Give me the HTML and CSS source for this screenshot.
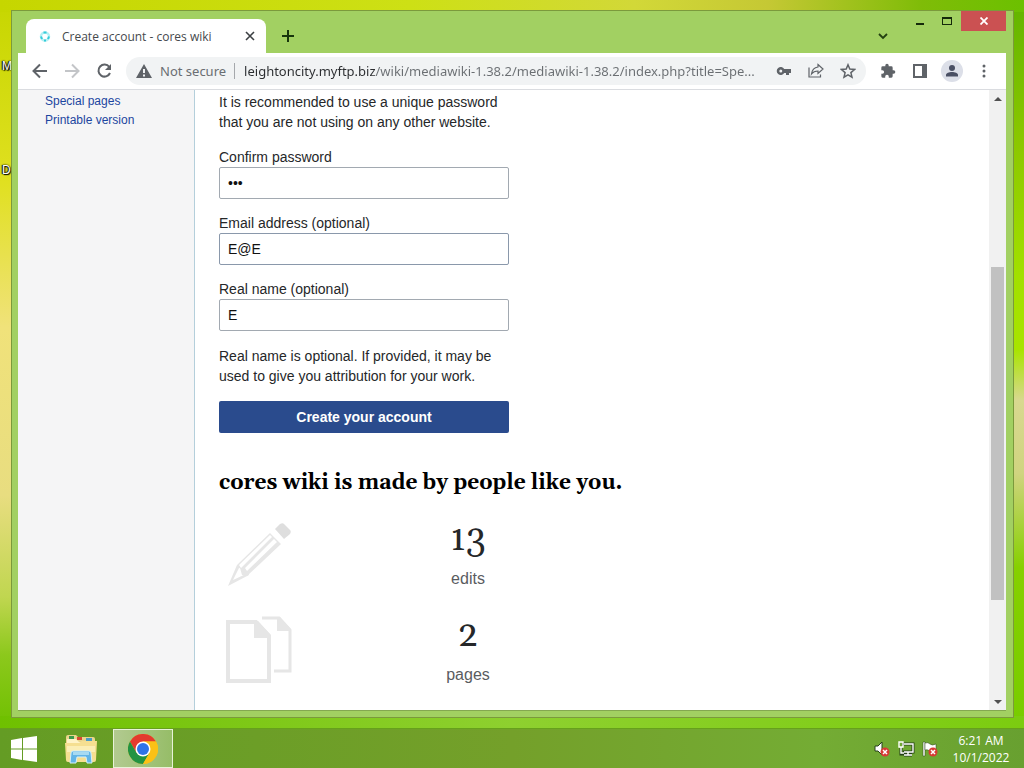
FILE: index.html
```html
<!DOCTYPE html>
<html lang="en">
<head>
    <meta charset="UTF-8">
    <meta name="viewport" content="width=device-width, initial-scale=1.0">
    <title>Create account - cores wiki</title>
    <link rel="stylesheet" href="styles.css">
</head>
<body>
    <div class="desktop">
        <span class="desktop-label label-m">M</span>
        <span class="desktop-label label-d">D</span>

        <div class="window">
            <!-- Title bar -->
            <div class="titlebar">
                <div class="tab">
                    <svg class="favicon" width="14" height="14" viewBox="0 0 14 14" fill="none">
                        <circle cx="7" cy="7.500" r="4" stroke="#b4f0f4" stroke-width="2.500"/>
                        <path d="M5.500 3.500h3M3 7.500l1 2.500M11 7.500l-1 2.500M6 11.500h2" stroke="#35cbd8" stroke-width="2"/>
                    </svg>
                    <span class="tab-title">Create account - cores wiki</span>
                    <button class="plain-btn" aria-label="Close tab">
                        <svg width="10" height="10" viewBox="0 0 10 10" stroke="#3c4043" stroke-width="1.600"><path d="M1 1l8 8M9 1l-8 8"/></svg>
                    </button>
                </div>
                <button class="plain-btn new-tab" aria-label="New tab">
                    <svg width="12" height="12" viewBox="0 0 12 12" stroke="#17350c" stroke-width="2"><path d="M6 0v12M0 6h12"/></svg>
                </button>
                <button class="plain-btn tab-search" aria-label="Search tabs">
                    <svg width="10" height="7" viewBox="0 0 10 7" fill="none" stroke="#234010" stroke-width="1.800"><path d="M1 1l4 4 4-4"/></svg>
                </button>
                <div class="window-controls">
                    <button aria-label="Minimize"><svg width="10" height="10" viewBox="0 0 10 10"><path d="M1 7h8v2H1z" fill="#14290a"/></svg></button>
                    <button aria-label="Maximize"><svg width="10" height="8" viewBox="0 0 10 8"><path fill-rule="evenodd" d="M0 0h10v8H0zM1 2v5h8V2z" fill="#14290a"/></svg></button>
                    <button class="close" aria-label="Close"><svg width="8" height="8" viewBox="0 0 8 8" stroke="#fff" stroke-width="1.800"><path d="M.5.5l7 7M7.500.5l-7 7"/></svg></button>
                </div>
            </div>

            <!-- Toolbar -->
            <div class="toolbar">
                <div class="nav-buttons">
                    <button class="icon-btn" aria-label="Back"><svg width="16" height="16" viewBox="0 0 16 16" fill="none" stroke="#5f6368" stroke-width="2"><path d="M15 8H2M8 1.500L1.500 8 8 14.500"/></svg></button>
                    <button class="icon-btn" aria-label="Forward"><svg width="16" height="16" viewBox="0 0 16 16" fill="none" stroke="#c3c5c8" stroke-width="2"><path d="M1 8h13M8 1.500L14.500 8 8 14.500"/></svg></button>
                    <button class="icon-btn" aria-label="Reload"><svg width="16" height="16" viewBox="0 0 16 16"><path d="M13.300 4A6 6 0 1 0 14 10" fill="none" stroke="#5f6368" stroke-width="2"/><path d="M15 1v6H9z" fill="#5f6368"/></svg></button>
                </div>
                <div class="omnibox">
                    <svg width="16" height="14" viewBox="0 0 16 14"><path fill="#5f6368" fill-rule="evenodd" d="M8 0l8 14H0zM7 5v4h2V5zM7 10.500v2h2v-2z"/></svg>
                    <span class="not-secure">Not secure</span>
                    <input class="url" type="text" aria-label="Address" value="leightoncity.myftp.biz/wiki/mediawiki-1.38.2/mediawiki-1.38.2/index.php?title=Spe...">
                    <button class="icon-btn" aria-label="Passwords"><svg width="16" height="16" viewBox="0 0 16 16"><path fill="#5f6368" fill-rule="evenodd" d="M8.200 6a4 4 0 1 0 0 4H10v2h3v-2h2V6zM4.800 6.500a1.500 1.500 0 1 1 0 3 1.500 1.500 0 0 1 0-3z"/></svg></button>
                    <button class="icon-btn" aria-label="Share"><svg width="16" height="16" viewBox="0 0 16 16" fill="none" stroke="#5f6368" stroke-width="1.200"><path d="M1 4.500V14h11.500v-2.500"/><path d="M10 1.500L15 6l-5 4.500V8C7 8 5 9 3.500 11 4 7 6.500 4.500 10 4z"/></svg></button>
                    <button class="icon-btn" aria-label="Bookmark"><svg width="16" height="16" viewBox="0 0 16 16" fill="none" stroke="#5f6368" stroke-width="1.500"><path d="M8 1.800l1.800 4.300 4.700.4-3.600 3.100 1.100 4.600L8 11.800l-4 2.400 1.100-4.600L1.500 6.500l4.700-.4z"/></svg></button>
                </div>
                <div class="toolbar-actions">
                    <button class="icon-btn" aria-label="Extensions"><svg width="16" height="16" viewBox="0 0 24 24"><path fill="#5f6368" d="M20.500 11H19V7a2 2 0 0 0-2-2h-4V3.500a2.500 2.500 0 0 0-5 0V5H4a2 2 0 0 0-2 2v3.800h1.500a2.700 2.700 0 0 1 0 5.400H2V20a2 2 0 0 0 2 2h3.800v-1.500a2.700 2.700 0 0 1 5.400 0V22H17a2 2 0 0 0 2-2v-4h1.500a2.500 2.500 0 0 0 0-5z"/></svg></button>
                    <button class="icon-btn" aria-label="Side panel"><svg width="14" height="14" viewBox="0 0 14 14"><path fill="#5f6368" fill-rule="evenodd" d="M0 0h14v14H0zM2 2v10h7V2z"/></svg></button>
                    <button class="icon-btn" aria-label="Profile"><svg width="22" height="22" viewBox="0 0 22 22"><circle cx="11" cy="11" r="11" fill="#dcdfe8"/><circle cx="11" cy="8" r="3" fill="#4a5064"/><path d="M5 16.500v-1.500c0-2 3-3 6-3s6 1 6 3v1.500z" fill="#4a5064"/></svg></button>
                    <button class="icon-btn" aria-label="Menu"><svg width="4" height="14" viewBox="0 0 4 14" fill="#5f6368"><circle cx="2" cy="2" r="1.500"/><circle cx="2" cy="7" r="1.500"/><circle cx="2" cy="12" r="1.500"/></svg></button>
                </div>
            </div>

            <!-- Wiki page -->
            <div class="viewport">
                <nav class="sidebar">
                    <a href="#">Special pages</a>
                    <a href="#">Printable version</a>
                </nav>
                <main class="content">
                    <form class="account-form">
                        <p>It is recommended to use a unique password that you are not using on any other website.</p>
                        <div class="field">
                            <label for="retype">Confirm password</label>
                            <input type="password" id="retype" value="abc">
                        </div>
                        <div class="field">
                            <label for="email">Email address (optional)</label>
                            <input type="text" id="email" class="active" value="E@E">
                        </div>
                        <div class="field">
                            <label for="realname">Real name (optional)</label>
                            <input type="text" id="realname" value="E">
                        </div>
                        <p>Real name is optional. If provided, it may be used to give you attribution for your work.</p>
                        <button type="submit">Create your account</button>
                    </form>
                    <section class="benefits">
                        <h2>cores wiki is made by people like you.</h2>
                        <div class="benefit">
                            <svg width="80" height="80" viewBox="0 0 80 80">
                                <path d="M9 73l9-21 9 0 3 10z" fill="#e6e6e6"/>
                                <path d="M14 67l6-12 5 1 2 5z" fill="#fff"/>
                                <path d="M18 52L51 20l11 11-34 32-5-1-2-7z" fill="#e6e6e6"/>
                                <path d="M20 52L51 22l2 2-31 31zM26 55L55 26l3 3-30 29z" fill="#fff"/>
                                <path d="M56 16l5-5c2-1 3-1 4 0l6 6c1 1 1 2 0 4l-6 5z" fill="#dedede"/>
                            </svg>
                            <div class="count"><strong>13</strong><span>edits</span></div>
                        </div>
                        <div class="benefit">
                            <svg width="80" height="80" viewBox="0 0 80 80">
                                <path d="M9 13h28l13 14v45H9z" fill="#fff" stroke="#e6e6e6" stroke-width="4"/>
                                <path d="M35 12h4l13 14v3H35z" fill="#e6e6e6"/>
                                <path d="M43 9h17l11 12v41H55" fill="none" stroke="#e6e6e6" stroke-width="3"/>
                                <path d="M58 8h3l11 12v2H58z" fill="#e6e6e6"/>
                            </svg>
                            <div class="count"><strong>2</strong><span>pages</span></div>
                        </div>
                    </section>
                </main>
                <div class="scrollbar" aria-hidden="true">
                    <span class="arrow up"></span>
                    <span class="track-before"></span>
                    <span class="thumb"></span>
                    <span class="track-after"></span>
                    <span class="arrow down"></span>
                </div>
            </div>
        </div>
    </div>

    <!-- Taskbar -->
    <footer class="taskbar">
        <button class="task start" aria-label="Start">
            <svg width="26" height="26" viewBox="0 0 26 26" fill="#fff"><path d="M0 4l11-2v10.500H0zM12 2l14-2v12.500H12zM0 13.500h11V24L0 22zM12 13.500h14V26l-14-2z"/></svg>
        </button>
        <button class="task" aria-label="File Explorer">
            <svg width="34" height="30" viewBox="0 0 34 30">
                <path d="M2 3q0-2 2-2h8l2 2h15q2 0 2 2v21H2z" fill="#ead58c"/>
                <path d="M5 2h5v3H5z" fill="#3a9a4b"/><path d="M13 3h5v3h-5z" fill="#d84932"/><path d="M22 4h6v3h-6z" fill="#4a9bc4"/>
                <path d="M3 5h9l3 3h17v4H3z" fill="#fff3c6"/>
                <path d="M1 9h14l3-2h15l-1 19q0 2-2 2H4q-2 0-2-2z" fill="#f5df91"/>
                <path d="M3 12h28v6H3z" fill="#fbeeb5"/>
                <path d="M6 29l1-10q0-2 2-2h16q2 0 2 2l1 10h-5l-1-6h-9l-1 6z" fill="#62b5e7" stroke="#d5f0fa"/>
                <path d="M9 18h16v3H9z" fill="#a7daf2"/>
            </svg>
        </button>
        <button class="task running" aria-label="Google Chrome">
            <svg width="30" height="30" viewBox="0 0 30 30">
                <circle cx="15" cy="15" r="15" fill="#fbc116"/>
                <path d="M2 7.500A15 15 0 0 1 28 7.500H15L8.500 18.750z" fill="#e33b2e"/>
                <path d="M2 7.500A15 15 0 0 0 15 30l6.500-11.250L8.500 18.750z" fill="#229342"/>
                <path d="M15 7.500h13A15 15 0 0 1 15 30l6.500-11.250z" fill="#fbc116"/>
                <circle cx="15" cy="15" r="7.500" fill="#fff"/><circle cx="15" cy="15" r="6" fill="#2f74e8"/>
            </svg>
        </button>
        <div class="tray">
            <svg width="16" height="16" viewBox="0 0 16 16"><path d="M1 5h3l4-4v13l-4-4H1z" fill="#fff" stroke="#26401a"/><circle cx="11" cy="11" r="4.500" fill="#d63b34"/><path d="M9 9l4 4M13 9l-4 4" stroke="#fff" stroke-width="1.500"/></svg>
            <svg width="18" height="16" viewBox="0 0 18 16" fill="none"><path d="M5 3h11v8H6M11 11v3M7 14h8M4 7v6h3" stroke="#26401a" stroke-width="3"/><path d="M2 1h4v5H2zM7 3h9v8H7M11 11v3M7 14h8M4 6v6h3" stroke="#fff" stroke-width="1.400"/></svg>
            <svg width="16" height="16" viewBox="0 0 16 16"><path d="M1 1h2v14H1z" fill="#fff" stroke="#26401a" stroke-width=".5"/><path d="M3 2q3-1 5 1t6 0v7q-3 2-6 0t-5-1z" fill="#fff" stroke="#26401a" stroke-width=".5"/><circle cx="11" cy="11" r="4.500" fill="#d63b34"/><path d="M9 9l4 4M13 9l-4 4" stroke="#fff" stroke-width="1.500"/></svg>
        </div>
        <div class="clock"><span>6:21 AM</span><span>10/1/2022</span></div>
    </footer>
</body>
</html>
```
FILE: styles.css
```css
* {
    box-sizing: border-box;
}
body {
    margin: 0;
    height: 100vh;
    display: flex;
    flex-direction: column;
    overflow: hidden;
    font-family: "Liberation Sans", Arial, sans-serif;
}
button {
    border: 0;
    padding: 0;
    background: none;
    display: flex;
    align-items: center;
    justify-content: center;
}
svg {
    flex: none;
}

/* Desktop */
.desktop {
    position: relative;
    flex: 1;
    min-height: 0;
    display: flex;
    padding: 10px 10px 10px 11px;
    background:
        linear-gradient(to right, #c6d600, #cde015 40%, #d2d838 62%, #c5c834 75%, #7fbc08 90%, #6cc000) top / 100% 12px no-repeat,
        linear-gradient(to right, #6fc000, #8ed02f 50%, #7ccc10) bottom / 100% 12px no-repeat,
        linear-gradient(#c6d600, #e0e020 25%, #f0e27a 45%, #e8dd80 68%, #c0d650 82%, #8cc81c 90%, #6fc000) left / 12px 100% no-repeat,
        linear-gradient(#62b400, #8cc800 20%, #a2e000 38%, #a8e400 48%, #d8d890 55%, #d0d480 65%, #86d000 78%, #78cc00) right / 12px 100% no-repeat;
}
.desktop-label {
    position: absolute;
    left: 2px;
    color: #fff;
    font-size: 12px;
    line-height: 14px;
    text-shadow: 0 0 2px #000, 1px 1px 1px #000, -1px 0 1px #000;
}
.label-m {
    top: 59px;
}
.label-d {
    top: 163px;
}

/* Browser window */
.window {
    position: relative;
    flex: 1;
    min-width: 0;
    display: flex;
    flex-direction: column;
    padding: 0 7px 6px 6px;
    border: 1px solid #7b9a3c;
    background: #a2d062;
}
.titlebar {
    height: 42px;
    flex: none;
    display: flex;
    align-items: flex-start;
}
.tab {
    display: flex;
    align-items: center;
    width: 240px;
    height: 34px;
    margin: 8px 0 0 8px;
    padding: 0 10px 0 12px;
    border-radius: 8px 8px 0 0;
    background: #fff;
    font-family: "Open Sans", "Noto Sans", sans-serif;
    font-size: 12px;
    color: #45494d;
}
.tab-title {
    flex: 1;
    margin-left: 10px;
    white-space: nowrap;
}
.plain-btn {
    width: 12px;
    height: 16px;
}
.new-tab {
    margin: 17px 0 0 16px;
}
.tab-search {
    margin: 17px 18px 0 auto;
}
.window-controls {
    display: flex;
    gap: 2px;
}
.window-controls button {
    width: 25px;
    height: 20px;
}
.window-controls .close {
    width: 45px;
    background: #cb5152;
}

.toolbar {
    height: 37px;
    flex: none;
    display: flex;
    align-items: center;
    padding: 0 6px;
    background: #fff;
    border-bottom: 1px solid #dadce0;
}
.nav-buttons {
    display: flex;
}
.icon-btn {
    width: 32px;
    height: 28px;
    flex: none;
}
.omnibox {
    flex: 1;
    min-width: 0;
    height: 28px;
    display: flex;
    align-items: center;
    margin: 0 6px;
    padding: 0 2px 0 10px;
    border-radius: 14px;
    background: #f1f3f4;
    font-family: "Noto Sans", "Open Sans", sans-serif;
    font-size: 13px;
    color: #6a6e72;
}
.not-secure {
    margin-left: 8px;
    padding-right: 8px;
    line-height: 16px;
    border-right: 1px solid #a5a8ac;
    white-space: nowrap;
}
.url {
    flex: 1;
    min-width: 0;
    margin-left: 9px;
    padding: 0;
    border: 0;
    outline: 0;
    font: inherit;
    text-overflow: ellipsis;
    /* the host is darker than the path */
    color: transparent;
    background: linear-gradient(to right, #2b2d30 131px, #6a6e72 131px);
    -webkit-background-clip: text;
    background-clip: text;
}
.toolbar-actions {
    display: flex;
}

/* Wiki page */
.viewport {
    flex: 1;
    min-height: 0;
    display: flex;
    overflow: hidden;
    background: #fff;
    border-bottom: 1px solid #84a850;
}
.sidebar {
    width: 177px;
    flex: none;
    display: flex;
    flex-direction: column;
    padding: 2px 0 0 27px;
    background: #f5f5f6;
    border-right: 1px solid #b4cfdb;
    font-size: 12px;
    line-height: 19px;
}
.sidebar a {
    color: #1c46a0;
    text-decoration: none;
}
.content {
    flex: 1;
    min-width: 0;
    padding: 2px 24px 0;
    color: #252729;
}
.account-form {
    width: 290px;
    font-size: 14px;
    line-height: 20px;
}
.account-form p {
    margin: 0 0 15px;
}
.field {
    margin-bottom: 14px;
}
.field:last-of-type {
    margin-bottom: 15px;
}
.field label {
    display: block;
}
.field input {
    display: block;
    width: 100%;
    height: 32px;
    padding: 0 8px;
    border: 1px solid #a2a9b1;
    border-radius: 2px;
    outline: 0;
    font-family: inherit;
    font-size: 14px;
    color: #111;
}
.field .active {
    border-color: #8a98ab;
}
.account-form button {
    width: 100%;
    height: 32px;
    border-radius: 2px;
    background: #2a4b8d;
    color: #fff;
    font-family: inherit;
    font-size: 14px;
    font-weight: bold;
}
.benefits h2 {
    margin: 36px 0 16px;
    font-family: Gelasio, "Liberation Serif", serif;
    font-size: 21px;
    line-height: 28px;
    color: #000;
}
.benefit {
    display: flex;
    align-items: flex-start;
    gap: 80px;
    height: 96px;
}
.count {
    width: 178px;
    display: flex;
    flex-direction: column;
    align-items: center;
}
.count strong {
    font-family: Gelasio, "Liberation Serif", serif;
    font-size: 36px;
    font-weight: normal;
    line-height: 54px;
}
.count span {
    font-size: 16px;
    line-height: 24px;
    color: #5a5c5f;
}

.scrollbar {
    width: 17px;
    flex: none;
    display: flex;
    flex-direction: column;
    background: #f1f1f1;
}
.arrow {
    height: 17px;
    display: flex;
    align-items: center;
    justify-content: center;
}
.arrow::before {
    content: "";
    border: 4px solid transparent;
}
.up::before {
    border-top: 0;
    border-bottom-color: #505050;
}
.down::before {
    border-bottom: 0;
    border-top-color: #505050;
}
.track-before {
    flex: 160;
}
.thumb {
    flex: 333;
    margin: 0 2px;
    background: #c1c1c1;
}
.track-after {
    flex: 93;
}

/* Taskbar */
.taskbar {
    height: 40px;
    flex: none;
    display: flex;
    align-items: center;
    background: linear-gradient(to right, #649c24, #74a02a 50%, #74ac34 80%, #68a030);
    border-top: 1px solid #66a01c;
}
.task {
    width: 60px;
    height: 39px;
}
.task.start {
    width: 48px;
    margin-right: 3px;
}
.running {
    margin-left: 2px;
    border: 1px solid #e8f2d8;
    background: linear-gradient(to right, #b2ca90, #96bd68);
}
.tray {
    display: flex;
    align-items: center;
    gap: 7px;
    margin-left: auto;
}
.clock {
    width: 86px;
    display: flex;
    flex-direction: column;
    align-items: center;
    font-family: "Open Sans", "Noto Sans", sans-serif;
    font-size: 12px;
    line-height: 17px;
    color: #fff;
}
```
